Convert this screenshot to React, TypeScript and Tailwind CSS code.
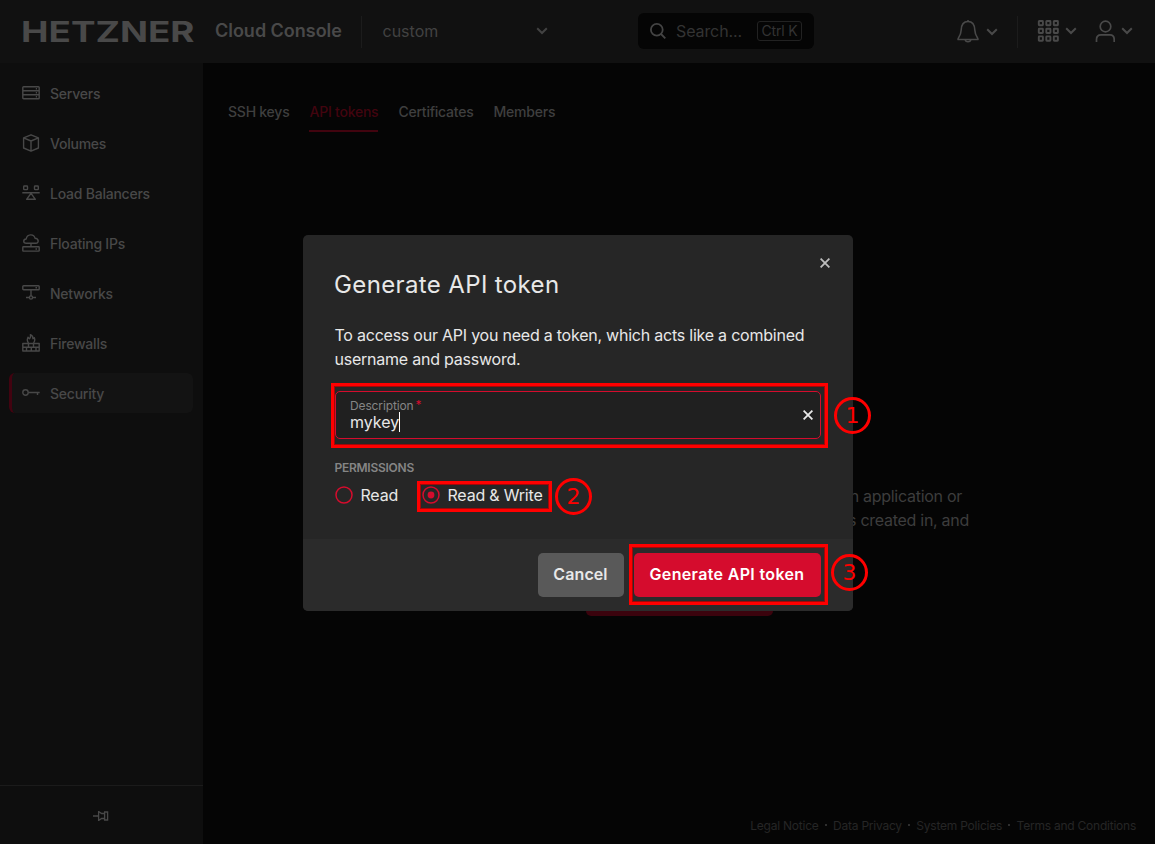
import React from "react";

type IconProps = { children: React.ReactNode };

function NavIcon({ children }: IconProps) {
  return (
    <svg width="18" height="18" viewBox="0 0 18 18" fill="none" stroke="currentColor" strokeWidth="1.4" strokeLinejoin="round" className="mb-[2px] shrink-0">
      {children}
    </svg>
  );
}

const navItems: { label: string; icon: React.ReactNode; active?: boolean }[] = [
  {
    label: "Servers",
    icon: (
      <>
        <rect x="0.8" y="2.8" width="16.4" height="12" rx="0.8" />
        <path d="M1 6.8h16M1 10.8h16M13.8 4.8h1.2M13.8 8.8h1.2M13.8 12.8h1.2" />
      </>
    ),
  },
  {
    label: "Volumes",
    icon: <path d="M9 .8l7.4 3v10.2L9 17.2l-7.4-3.2V3.8zM1.6 3.8L9 7l7.4-3.2M9 7v10" />,
  },
  {
    label: "Load Balancers",
    icon: (
      <>
        <rect x="1.7" y="2" width="3.8" height="3.6" rx="0.7" />
        <rect x="12.5" y="2" width="3.8" height="3.6" rx="0.7" />
        <path d="M.3 8.7h17.4M9 9.3l4.4 6H4.6z" />
      </>
    ),
  },
  {
    label: "Floating IPs",
    icon: (
      <>
        <path d="M4.3 9.3C.9 9.3.9 5.2 4.2 5 5-.4 12-.4 13 4.2c4.1.2 4.1 5.1.8 5.1zM9 9.3v3.5" />
        <rect x="0.8" y="12.8" width="16.4" height="4.3" rx="0.6" />
        <path d="M13.5 15h1.5" />
      </>
    ),
  },
  {
    label: "Networks",
    icon: (
      <>
        <rect x="0.8" y="1.8" width="16.4" height="4" rx="0.8" />
        <path d="M13.5 3.8h1.5M9 5.8v6.2M4 13.5h3.3M10.7 13.5h3.3" />
        <circle cx="9" cy="13.5" r="1.6" />
      </>
    ),
  },
  {
    label: "Firewalls",
    icon: (
      <>
        <path d="M.8 9.5h16.4v7.5H.8zM1 13.2h16M6.5 9.5v3.7M11.5 9.5v3.7M4.5 13.2V17M9.3 13.2V17M14 13.2V17" />
        <path d="M6.5 9C4 6 6 4 6 3.2l1.5 1.5c1.500-1 1-3 .9-4 2.500 1 2.600 3 2.600 4l1.300-1c1 2.300.3 4-.8 5.300" />
      </>
    ),
  },
  {
    label: "Security",
    active: true,
    icon: (
      <>
        <circle cx="3.5" cy="8.5" r="2.7" />
        <path d="M6.2 8.5h11.5M15.5 8.5v2.6" />
      </>
    ),
  },
];

const footerLinks = ["Legal Notice", "Data Privacy", "System Policies", "Terms and Conditions"];

function Chevron() {
  return (
    <svg width="12" height="8" viewBox="0 0 12 8" fill="none" stroke="currentColor" strokeWidth="2" className="block shrink-0">
      <path d="M1.2 1.2L6 6l4.8-4.8" />
    </svg>
  );
}

function Cross() {
  return (
    <svg width="10" height="10" viewBox="0 0 10 10" fill="none" stroke="currentColor" strokeWidth="1.8">
      <path d="M.6.6l8.8 8.8M9.4.6L.6 9.4" />
    </svg>
  );
}

function Radio({ checked }: { checked?: boolean }) {
  return (
    <svg width="18" height="18" viewBox="0 0 18 18" fill="none" className="mr-[7.5px] shrink-0 text-[#d50c2d]">
      <circle cx="9" cy="9" r="8" stroke="currentColor" strokeWidth="1.5" />
      {checked && <circle cx="9" cy="9" r="3.4" fill="currentColor" />}
    </svg>
  );
}

function Header() {
  return (
    <header className="flex h-[63px] shrink-0 items-center bg-[#111111] pb-[2px] text-[#494949]">
      <div className="mt-[2px] ml-[21px] w-[194px] shrink-0">
        <span className="block w-[138px] origin-left scale-x-[1.27] text-[29px] leading-[60px] font-bold whitespace-nowrap">HETZNER</span>
      </div>
      <span className="w-[146px] shrink-0 text-[18px] font-semibold tracking-[-0.02px] whitespace-nowrap">Cloud Console</span>
      <div className="mt-[2px] h-8 w-px bg-[#1c1c1c]" />
      <div className="ml-[20.5px] flex w-[165.5px] items-center justify-between text-[#424242]">
        <span className="text-base">custom</span>
        <Chevron />
      </div>
      <div className="ml-[90px] flex h-9 w-[176px] items-center rounded-md bg-[#050505] pl-3 text-[#333333]">
        <svg width="16" height="16" viewBox="0 0 16 16" fill="none" stroke="#444444" strokeWidth="1.8">
          <circle cx="6.8" cy="6.8" r="5.9" />
          <path d="M11 11l4.3 4.3" />
        </svg>
        <span className="ml-[10px] w-[81px] text-base tracking-[-0.1px]">Search...</span>
        <span className="flex h-5 w-[45px] items-center justify-center rounded-[3px] border border-[#222222] text-sm tracking-[-0.2px] whitespace-nowrap">Ctrl K</span>
      </div>
      <div className="ml-[142px] flex items-center">
        <svg width="24" height="24" viewBox="0 0 24 24" fill="none" stroke="currentColor" strokeWidth="1.6" strokeLinejoin="round">
          <path d="M12 1v1.5M2 20.5c-.9-.9 3-3.5 3.2-9.5.2-5.5 3-8.5 6.800-8.500s6.600 3 6.800 8.500c.2 6 4.100 8.600 3.200 9.500zM9.300 21c.2 2.300 5.200 2.300 5.400 0" />
        </svg>
        <span className="mt-[2px] ml-[6px]"><Chevron /></span>
        <div className="mt-[2px] ml-[19px] h-8 w-px bg-[#1c1c1c]" />
        <svg width="22" height="22" viewBox="0 0 22 22" fill="none" stroke="currentColor" strokeWidth="1.9" className="ml-[19px]">
          {[1, 8.7, 16.4].map((y) =>
            [1.8, 9.3, 16.8].map((x) => <rect key={`${x}-${y}`} x={x} y={y} width="4.1" height="4.3" rx="0.5" />),
          )}
        </svg>
        <span className="ml-[6px]"><Chevron /></span>
        <svg width="20" height="22" viewBox="0 0 20 22" fill="none" stroke="currentColor" strokeWidth="1.7" className="mt-px ml-[18px]">
          <circle cx="10.5" cy="6.5" r="5.3" />
          <path d="M1.5 22v-2.5c0-3.300 2-4.700 4.500-4.700h9c2.500 0 4.200 1.400 4.200 4.700V22" />
        </svg>
        <span className="ml-[6px]"><Chevron /></span>
      </div>
    </header>
  );
}

function Sidebar() {
  return (
    <aside className="flex w-[203px] shrink-0 flex-col bg-[#0e0e0e] text-[#484848]">
      <nav className="flex flex-1 flex-col gap-[10px] pt-[10px] pr-[10px] pl-[9px]">
        {navItems.map((item) => (
          <a
            key={item.label}
            className={`flex h-10 items-center gap-[10px] rounded-md border-l-[3px] pt-[2px] pl-[10px] text-sm font-medium tracking-[-0.23px] ${
              item.active ? "border-[#420310] bg-[#131313]" : "border-transparent"
            }`}
          >
            <NavIcon>{item.icon}</NavIcon>
            <span className="leading-5">{item.label}</span>
          </a>
        ))}
      </nav>
      <div className="flex h-[59px] items-center justify-center border-t border-[#1b1b1b] pr-px">
        <svg width="16" height="10" viewBox="0 0 16 10" fill="none" stroke="currentColor" strokeWidth="1.3" className="mt-[2px]">
          <path d="M0 5h5M5.6.5v9l3-2h3v-5h-3zM11.6 1h3v8h-3z" />
        </svg>
      </div>
    </aside>
  );
}

function Main() {
  return (
    <main className="flex min-w-0 flex-1 flex-col bg-[#050505]">
      <div className="flex gap-5 pt-[38px] pl-[25px] text-sm font-medium tracking-[-0.23px] text-[#3f3f3f]">
        <span className="h-[31px] leading-[22px]">SSH keys</span>
        <span className="h-[31px] border-b-2 border-[#42040f] leading-[22px] text-[#42040f]">API tokens</span>
        <span className="h-[31px] leading-[22px]">Certificates</span>
        <span className="h-[31px] leading-[22px]">Members</span>
      </div>
      <div className="mt-[352px] flex w-[766px] flex-col text-right text-base leading-6 tracking-[-0.28px] text-[#3d3d3d]">
        <span className="pr-[7px]">from an application or</span>
        <span>to the project it is created in, and</span>
      </div>
      <div className="mt-[40px] ml-[383px] h-11 w-[187px] rounded-[5px] bg-[#3b030d]" />
      <footer className="mt-auto flex justify-end pr-[19px] pb-[9px] text-xs leading-[18px] tracking-[-0.23px] text-[#262626]">
        {footerLinks.map((link, i) => (
          <React.Fragment key={link}>
            {i > 0 && <span className="mt-[7px] mr-[6.5px] ml-[6px] size-[2px] bg-[#2e2e2e]" />}
            <span>{link}</span>
          </React.Fragment>
        ))}
      </footer>
    </main>
  );
}

function Marker({ n, className }: { n: number; className: string }) {
  return (
    <div
      className={`absolute flex size-[37px] items-center justify-center rounded-full border-[3px] border-[#ff0000] font-['DejaVu_Sans',sans-serif] text-[22px] leading-none text-[#ff0000] ${className}`}
    >
      {n}
    </div>
  );
}

function Frame({ className }: { className: string }) {
  return <div className={`pointer-events-none absolute border-[3px] border-[#ff0000] inset-ring inset-ring-[#a00808] ${className}`} />;
}

function Dialog() {
  return (
    <div className="absolute inset-0 flex items-start justify-center pt-[235px] pl-px">
      <section className="relative flex h-[376px] w-[550px] flex-col rounded-[5px] bg-[#262626] text-[#e8e8e8]">
        <div className="flex flex-1 flex-col pr-8 pl-8">
          <div className="flex justify-between">
            <h1 className="mt-[34px] -ml-px text-[24px] leading-8 tracking-[0.37px]">Generate API token</h1>
            <button className="mt-[23px] mr-[-9px] h-[10px] text-[#bdbdbd]"><Cross /></button>
          </div>
          <p className="mt-[22px] -ml-[0.5px] text-base leading-6 tracking-[-0.23px]">
            To access our API you need a token, which acts like a combined
            <br />
            username and password.
          </p>
          <div className="mt-5 flex h-12 items-center justify-between rounded-[5px] border border-[#d50c2d] bg-[#202020] pr-[7px] pl-[14px]">
            <div className="pb-[2px]">
              <div className="mt-px flex text-xs leading-4 tracking-[-0.13px] text-[#858585]">
                Description<span className="ml-[2px] -mt-[1px] text-[#d50c2d]">*</span>
              </div>
              <div className="-mt-[2px] flex items-center text-base leading-[18px]">
                mykey<span className="h-5 w-px bg-white" />
              </div>
            </div>
            <Cross />
          </div>
          <div className="mt-5 -ml-[0.5px] text-xs leading-[18px] font-semibold tracking-[-0.26px] text-[#858585]">PERMISSIONS</div>
          <div className="mt-[6px] flex items-center text-base leading-6 tracking-[-0.2px]">
            <Radio />
            <span className="w-[61.5px]">Read</span>
            <Radio checked />
            <span>Read &amp; Write</span>
          </div>
        </div>
        <div className="flex h-[72px] items-center justify-end gap-[10px] rounded-b-[5px] bg-[#2b2b2b] pr-8 text-base font-semibold">
          <button className="h-11 w-[86px] rounded-[5px] bg-[#595959] pr-px pb-[2px] tracking-[0.1px]">Cancel</button>
          <button className="h-11 w-[187px] rounded-[5px] bg-[#d50c2d] pr-px pb-[2px] tracking-[0.35px] whitespace-nowrap text-white">Generate API token</button>
        </div>
        <Frame className="top-[148px] left-[28px] h-[65px] w-[497px]" />
        <Frame className="top-[246px] left-[114px] h-[31px] w-[135px]" />
        <Frame className="top-[309px] left-[326px] h-[61px] w-[199px]" />
        <Marker n={1} className="top-[162px] left-[531px]" />
        <Marker n={2} className="top-[243px] left-[252px]" />
        <Marker n={3} className="top-[319px] left-[528px]" />
      </section>
    </div>
  );
}

export default function App() {
  return (
    <div className="relative flex h-[844px] w-[1155px] flex-col overflow-hidden bg-[#050505] font-['Inter',sans-serif]">
      <Header />
      <div className="flex min-h-0 flex-1">
        <Sidebar />
        <Main />
      </div>
      <Dialog />
    </div>
  );
}
